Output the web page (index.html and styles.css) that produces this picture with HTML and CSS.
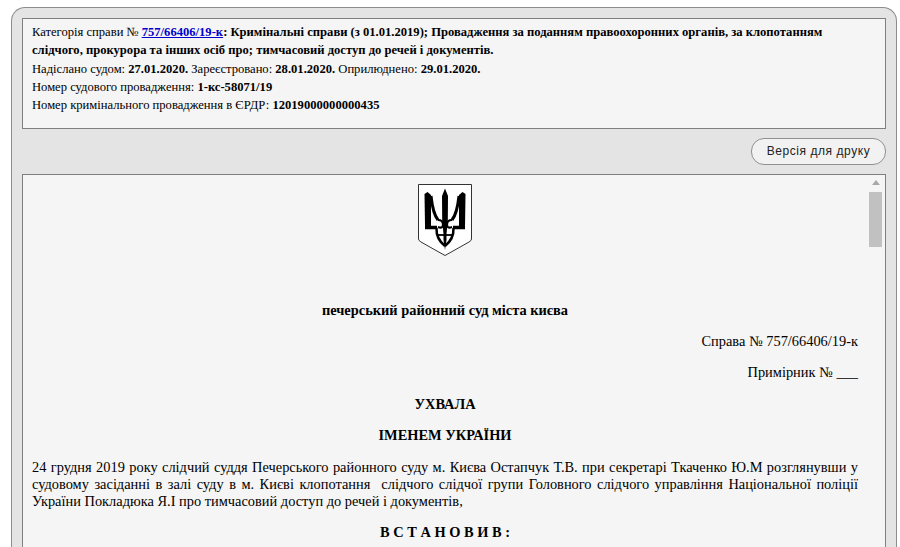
FILE: index.html
```html
<!DOCTYPE html>
<html lang="uk">
<head>
    <meta charset="UTF-8">
    <meta name="viewport" content="width=device-width, initial-scale=1.0">
    <title>Ухвала</title>
    <link rel="stylesheet" href="styles.css">
</head>
<body>
    <div class="panel">
        <div class="case-info">
            <div>Категорія справи № <a href="#"><b>757/66406/19-к</b></a><b>: Кримінальні справи (з 01.01.2019); Провадження за поданням правоохоронних органів, за клопотанням слідчого, прокурора та інших осіб про; тимчасовий доступ до речей і документів.</b></div>
            <div>Надіслано судом: <b>27.01.2020.</b> Зареєстровано: <b>28.01.2020.</b> Оприлюднено: <b>29.01.2020.</b></div>
            <div>Номер судового провадження: <b>1-кс-58071/19</b></div>
            <div>Номер кримінального провадження в ЄРДР: <b>12019000000000435</b></div>
        </div>
        <div class="actions">
            <button class="print-button">Версія для друку</button>
        </div>
        <div class="document">
            <div class="scrollbar">
                <div class="scroll-arrow"></div>
                <div class="scroll-thumb"></div>
            </div>
            <div class="emblem">
                <svg width="54" height="72" viewBox="0 0 54 72">
                    <path d="M0.5 0.5H53.5V55Q53.5 56.500 51 58L27 71.500L3 58Q0.500 56.500 0.500 55Z" fill="#fff" stroke="#333" stroke-width="1"/>
                    <g id="half" fill="none" stroke="#000">
                        <path fill="#000" stroke="none" d="M6.500 10L9.500 8L13 11V42H7Z"/>
                        <path stroke-width="3" d="M13 12Q15 30 20 36"/>
                        <path stroke-width="3.500" d="M7 43.500H19"/>
                        <path stroke-width="2.200" d="M20 36Q25 36 25 40.500T20 43"/>
                        <path stroke-width="2.500" d="M18.500 44Q18 55 27 62"/>
                    </g>
                    <use href="#half" transform="translate(54 0) scale(-1 1)"/>
                    <path fill="#000" d="M27 4.500L30 12L29.800 36L28.500 50V56L27 66L25.500 56V50L24.200 36L24 12Z"/>
                    <path fill="none" stroke="#000" stroke-width="1.800" d="M19 51H35"/>
                </svg>
            </div>
            <p class="court">печерський районний суд міста києва</p>
            <p class="right">Справа № 757/66406/19-к</p>
            <p class="right">Примірник № ___</p>
            <p class="center"><b>УХВАЛА</b></p>
            <p class="center"><b>ІМЕНЕМ УКРАЇНИ</b></p>
            <p class="text">24 грудня 2019 року слідчий суддя Печерського районного суду м. Києва Остапчук Т.В. при секретарі Ткаченко Ю.М розглянувши у судовому засіданні в залі суду в м. Києві клопотання&nbsp; слідчого слідчої групи Головного слідчого управління Національної поліції України Покладюка Я.І про тимчасовий доступ до речей і документів,</p>
            <p class="center"><b>В С Т А Н О В И В :</b></p>
        </div>
    </div>
</body>
</html>
```

FILE: styles.css
```css
html, body {
    height: 100%;
    overflow: hidden;
}
body {
    margin: 0;
    background: #fff;
    font-family: "Liberation Serif", "Times New Roman", serif;
    color: #000;
}
.panel {
    margin: 7px 3px 0 11px;
    padding: 10px 10px 0 10px;
    background: #e4e4e4;
    border: 1px solid #8c8c8c;
    border-bottom: none;
    border-radius: 14px 14px 0 0;
    height: 700px;
}
.case-info {
    background: #f5f5f5;
    border: 1px solid #808080;
    padding: 4px 40px 13px 9px;
    font-size: 12.6px;
    line-height: 18.25px;
    height: 92px;
}
.case-info a {
    color: #0000cc;
}
.actions {
    display: flex;
    justify-content: flex-end;
    padding: 9px 0;
}
.print-button {
    width: 135px;
    height: 27px;
    padding: 0 0 2px 0;
    background: #f2f2f2;
    border: 1px solid #909090;
    border-radius: 13px;
    color: #222;
    font-family: "Liberation Sans", Arial, sans-serif;
    font-size: 12px;
    letter-spacing: 0.55px;
}
.document {
    position: relative;
    background: #f5f5f5;
    border: 1px solid #808080;
    padding: 9px 27px 0 9px;
    font-size: 14.4px;
    line-height: 17px;
}
.scrollbar {
    position: absolute;
    top: 5px;
    right: 3px;
    width: 13px;
}
.scroll-arrow {
    width: 0;
    margin: 0 auto 7px auto;
    border-left: 4px solid transparent;
    border-right: 4px solid transparent;
    border-bottom: 5px solid #a8a8a8;
}
.scroll-thumb {
    height: 55px;
    background: #c1c1c1;
}
.emblem {
    display: flex;
    justify-content: center;
    height: 72px;
    margin-bottom: 45.6px;
}
.document p {
    margin: 14.4px 0;
}
.court {
    text-align: center;
    font-weight: bold;
}
.right {
    text-align: right;
}
.center {
    text-align: center;
}
.text {
    text-align: justify;
}
```
